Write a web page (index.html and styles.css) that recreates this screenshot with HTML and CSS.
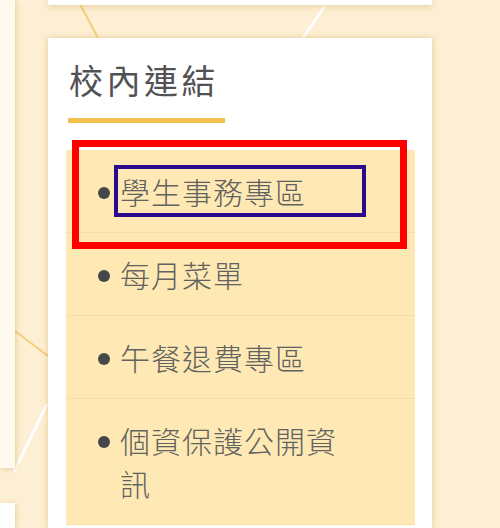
FILE: index.html
```html
<!DOCTYPE html>
<html lang="zh-Hant">
<head>
<meta charset="utf-8">
<title>校內連結</title>
<link rel="stylesheet" href="styles.css">
</head>
<body>
<svg class="deco" width="500" height="528" viewBox="0 0 500 528" aria-hidden="true">
  <line x1="80" y1="4" x2="98" y2="38" stroke="#f3cf78" stroke-width="2"/>
  <line x1="326" y1="4" x2="303" y2="38" stroke="#ffffff" stroke-width="3"/>
  <line x1="15" y1="331" x2="48" y2="356" stroke="#f3cf78" stroke-width="2"/>
  <line x1="47" y1="404" x2="14" y2="472" stroke="#ffffff" stroke-width="3"/>
</svg>
<div class="page">
  <div class="side">
    <div class="side-card side-card--a"></div>
    <div class="side-card side-card--b"></div>
  </div>
  <div class="main">
    <div class="top-card"></div>
    <section class="card">
      <div class="card-head">
        <h2 class="card-title">校內連結</h2>
        <div class="card-bar"></div>
      </div>
      <ul class="links">
        <li class="link-item">
          <a class="link" href="#">學生事務專區</a>
          <div class="mark-red"></div>
          <div class="mark-blue"></div>
        </li>
        <li class="link-item"><a class="link" href="#">每月菜單</a></li>
        <li class="link-item"><a class="link" href="#">午餐退費專區</a></li>
        <li class="link-item"><a class="link" href="#">個資保護公開資訊</a></li>
      </ul>
    </section>
  </div>
</div>
</body>
</html>
```
FILE: styles.css
```css
html, body {
  margin: 0;
  padding: 0;
}
body {
  width: 500px;
  height: 528px;
  overflow: hidden;
  background: #fdefd3;
  font-family: "Noto Sans CJK TC", "Noto Sans", sans-serif;
  position: relative;
}
.deco {
  position: absolute;
  left: 0;
  top: 0;
  z-index: 0;
}
.page {
  position: relative;
  z-index: 1;
  display: flex;
  gap: 33px;
  height: 528px;
  overflow: hidden;
}
.side {
  width: 15px;
  display: flex;
  flex-direction: column;
  gap: 35px;
}
.side-card {
  background: #fff;
  box-shadow: 1px 1px 5px rgba(205, 165, 85, 0.45);
}
.side-card--a {
  height: 468px;
  background: #fff9ee;
}
.side-card--b {
  flex: 1;
}
.main {
  width: 384px;
  display: flex;
  flex-direction: column;
}
.top-card {
  height: 5px;
  background: #fff;
  box-shadow: 0 1px 6px rgba(205, 165, 85, 0.5);
  margin-bottom: 33px;
}
.card {
  flex: 1;
  min-height: 0;
  background: #fff;
  box-shadow: 0 0 6px rgba(205, 165, 85, 0.5);
  padding: 21px 17px 0 18px;
  overflow: hidden;
}
.card-head {
  padding-left: 2px;
}
.card-title {
  margin: 0;
  font-size: 34px;
  line-height: 41px;
  font-weight: 400;
  letter-spacing: 3.5px;
  color: #525255;
  padding-left: 1px;
}
.card-bar {
  width: 157px;
  height: 5px;
  background: #f1c14e;
  margin-top: 18px;
}
.links {
  list-style: none;
  margin: 27px 0 0;
  padding: 0;
  background: #fee9b4;
}
.link-item {
  position: relative;
  padding: 20px 60px 19px 32px;
  border-bottom: 1px solid #f7dea2;
  display: flex;
  gap: 10px;
}
.link-item::before {
  content: "";
  flex: none;
  width: 12px;
  height: 12px;
  border-radius: 50%;
  background: #46474b;
  margin-top: 17px;
}
.link {
  font-size: 30px;
  line-height: 43px;
  letter-spacing: 1px;
  font-weight: 300;
  color: #626260;
  text-decoration: none;
}
.mark-red {
  position: absolute;
  left: 6px;
  top: -10px;
  width: 335px;
  height: 109px;
  box-sizing: border-box;
  border: 7px solid #ff0000;
}
.mark-blue {
  position: absolute;
  left: 48px;
  top: 15px;
  width: 252px;
  height: 52px;
  box-sizing: border-box;
  border: 4px solid #2a0b8c;
}
```
